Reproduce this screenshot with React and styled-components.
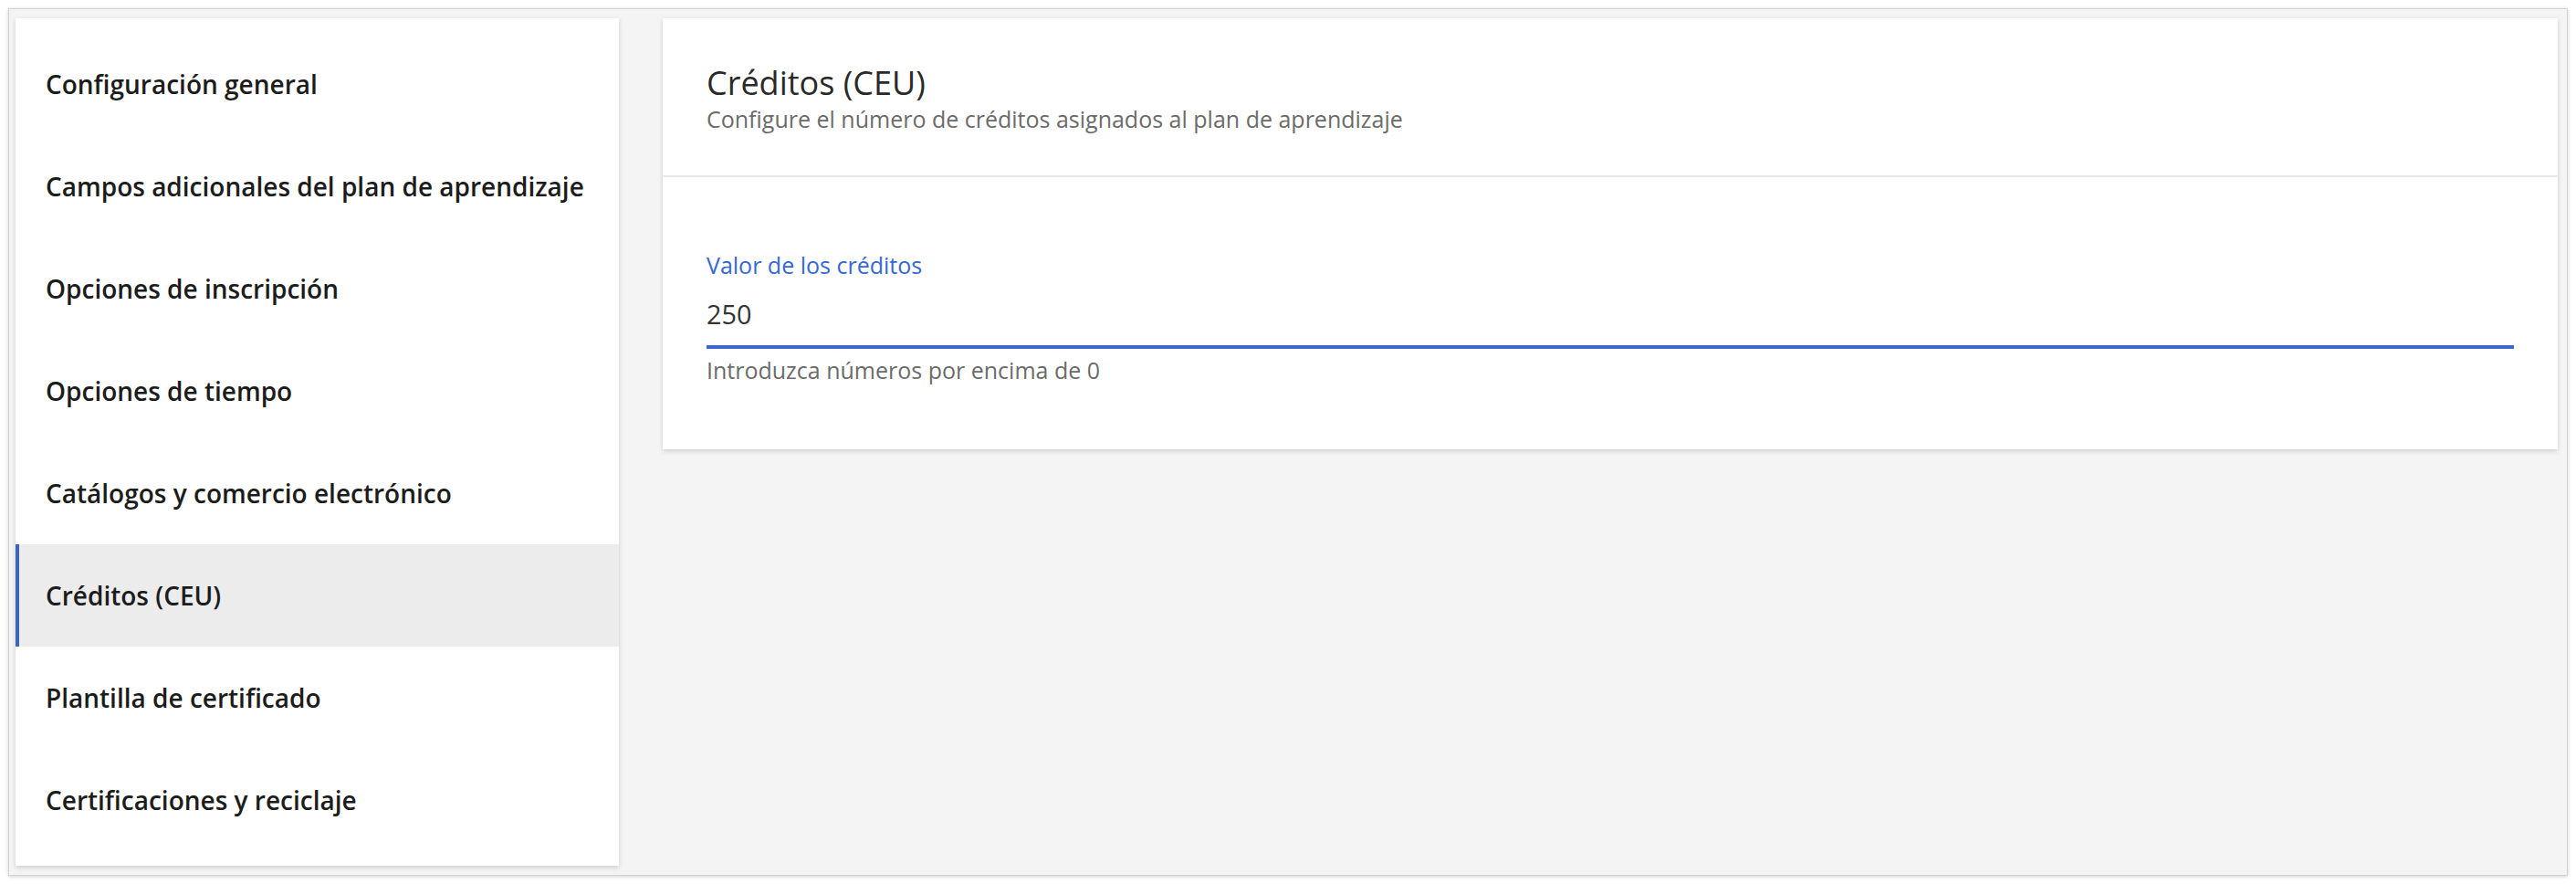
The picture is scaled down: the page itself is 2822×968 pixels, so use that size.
import React from "react";
import styled, { createGlobalStyle } from "styled-components";

const GlobalStyle = createGlobalStyle`
  html, body {
    margin: 0;
    padding: 0;
    background: #ffffff;
    font-family: "Open Sans", "Noto Sans", Arial, sans-serif;
  }
  * { box-sizing: border-box; }
`;

const Frame = styled.div`
  margin: 9px;
  height: 950px;
  border: 1px solid #d2d2d2;
  box-shadow: 0 1px 4px rgba(0, 0, 0, 0.18);
  background: #f4f4f4;
  padding: 10px 10px 10px 7px;
  display: flex;
  align-items: flex-start;
  gap: 48px;
`;

const Sidebar = styled.nav`
  width: 661px;
  flex: none;
  background: #ffffff;
  padding: 16px 0;
  box-shadow: 0 2px 5px rgba(0, 0, 0, 0.16);
  display: flex;
  flex-direction: column;
`;

const NavItem = styled.div`
  height: 112px;
  display: flex;
  align-items: center;
  padding-left: 33px;
  font-size: 28px;
  font-weight: 600;
  color: #1c1c1c;
  background: ${(p) => (p.$active ? "#ececec" : "transparent")};
  box-shadow: ${(p) => (p.$active ? "inset 4px 0 0 #3a63c4" : "none")};
  white-space: nowrap;
`;

const Card = styled.section`
  flex: 1;
  background: #ffffff;
  box-shadow: 0 2px 5px rgba(0, 0, 0, 0.16);
`;

const CardHeader = styled.header`
  padding: 46px 48px 51px;
  border-bottom: 2px solid #e8e8e8;
`;

const Title = styled.h2`
  margin: 0;
  font-size: 36px;
  line-height: 50px;
  font-weight: 400;
  color: #2a2a2a;
`;

const Subtitle = styled.p`
  margin: 3px 0 0;
  font-size: 25px;
  line-height: 22px;
  color: #6b6b6b;
`;

const CardBody = styled.div`
  padding: 80px 48px 72px;
`;

const Field = styled.div`
  display: flex;
  flex-direction: column;
`;

const Label = styled.label`
  font-size: 25px;
  line-height: 32px;
  color: #3567d6;
`;

const Input = styled.div`
  margin-top: 20px;
  font-size: 28.8px;
  line-height: 36px;
  color: #333333;
  padding-bottom: 16px;
  border-bottom: 4px solid #3a66d2;
`;

const Helper = styled.div`
  margin-top: 8px;
  font-size: 25px;
  line-height: 30px;
  color: #6b6b6b;
`;

const items = [
  "Configuración general",
  "Campos adicionales del plan de aprendizaje",
  "Opciones de inscripción",
  "Opciones de tiempo",
  "Catálogos y comercio electrónico",
  "Créditos (CEU)",
  "Plantilla de certificado",
  "Certificaciones y reciclaje",
];

export default function App() {
  return (
    <>
      <GlobalStyle />
      <Frame>
        <Sidebar>
          {items.map((it) => (
            <NavItem key={it} $active={it === "Créditos (CEU)"}>
              {it}
            </NavItem>
          ))}
        </Sidebar>
        <Card>
          <CardHeader>
            <Title>Créditos (CEU)</Title>
            <Subtitle>Configure el número de créditos asignados al plan de aprendizaje</Subtitle>
          </CardHeader>
          <CardBody>
            <Field>
              <Label>Valor de los créditos</Label>
              <Input>250</Input>
              <Helper>Introduzca números por encima de 0</Helper>
            </Field>
          </CardBody>
        </Card>
      </Frame>
    </>
  );
}
